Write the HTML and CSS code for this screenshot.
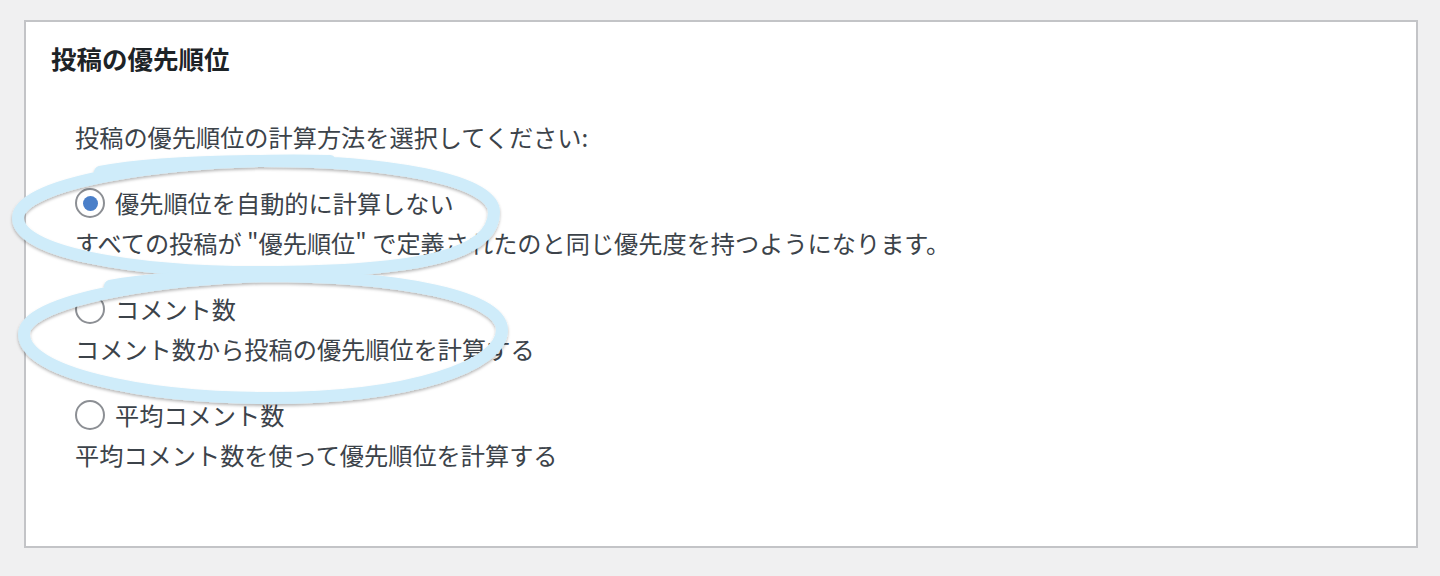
FILE: index.html
```html
<!DOCTYPE html>
<html lang="ja">
<head>
    <meta charset="utf-8">
    <title>投稿の優先順位</title>
    <link rel="stylesheet" href="styles.css">
</head>
<body>
  <div class="panel">
    <h2 class="panel-title">投稿の優先順位</h2>

    <div class="panel-body">
      <p class="intro">投稿の優先順位の計算方法を選択してください:</p>

      <div class="option">
        <label class="option-label">
          <span class="radio checked"></span>
          優先順位を自動的に計算しない
        </label>
        <p class="option-desc">すべての投稿が "優先順位" で定義されたのと同じ優先度を持つようになります。</p>
      </div>

      <div class="option">
        <label class="option-label">
          <span class="radio"></span>
          コメント数
        </label>
        <p class="option-desc">コメント数から投稿の優先順位を計算する</p>
      </div>

      <div class="option">
        <label class="option-label">
          <span class="radio"></span>
          平均コメント数
        </label>
        <p class="option-desc">平均コメント数を使って優先順位を計算する</p>
      </div>
    </div>
  </div>

  <!-- annotation rings drawn over the form -->
  <svg class="marks" width="1440" height="576" viewBox="0 0 1440 576">
    <defs>
      <filter id="ring-shadow" x="-10%" y="-30%" width="120%" height="160%">
        <feDropShadow dx="0" dy="2" stdDeviation="1.6" flood-color="#000" flood-opacity="0.28"/>
      </filter>
    </defs>
    <g fill="none" stroke="#cfecfa" stroke-width="12" stroke-linecap="round" filter="url(#ring-shadow)">
      <path d="M 330 161 C 160 157, 18 184, 18 218 C 18 252, 130 272, 260 272 C 430 272, 494 252, 494 212 C 494 180, 390 160, 250 161 C 180 162, 130 166, 100 172"/>
      <path d="M 340 276 C 170 272, 24 300, 24 334 C 24 372, 140 398, 270 398 C 410 398, 502 366, 502 330 C 502 296, 400 276, 262 276 C 190 276, 140 280, 110 286"/>
    </g>
  </svg>
</body>
</html>
```

FILE: styles.css
```css
* {
    margin: 0;
    padding: 0;
    box-sizing: border-box;
}

body {
    font-family: "Noto Sans CJK JP", "Noto Sans", sans-serif;
    background-color: #f0f0f1;
    color: #3c434a;
    padding: 20px 22px 0 24px;
}

.panel {
    background-color: #fff;
    border: 2px solid #c3c4c7;
    height: 528px;
    padding: 18px 25px 0 25px;
}

.panel-title {
    font-size: 25.5px;
    font-weight: 700;
    line-height: 36px;
    color: #1d2327;
}

.panel-body {
    padding: 41px 0 0 24px;
}

.intro,
.option-desc,
.option-label {
    font-size: 24.2px;
    line-height: 40px;
}

.option {
    margin-top: 26px;
}

.option-label {
    display: flex;
    align-items: center;
    gap: 10px;
}

.radio {
    width: 30px;
    height: 30px;
    border: 2px solid #8c8f94;
    border-radius: 50%;
    display: flex;
    align-items: center;
    justify-content: center;
    flex-shrink: 0;
}

.radio.checked::before {
    content: "";
    width: 15px;
    height: 15px;
    border-radius: 50%;
    background-color: #4a7fc9;
}

.marks {
    position: absolute;
    left: 0;
    top: 0;
    pointer-events: none;
}
```
